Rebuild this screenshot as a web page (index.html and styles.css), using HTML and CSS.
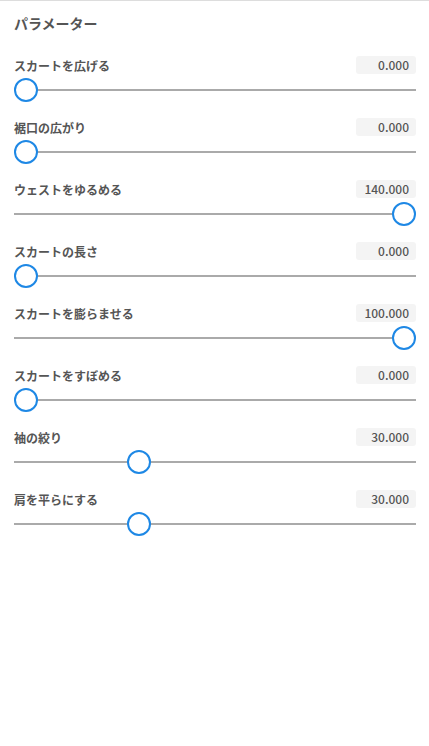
FILE: index.html
```html
<!DOCTYPE html>
<html>

<head>
    <title>パラメーター</title>
    <meta charset="UTF-8">
    <meta name="viewport" content="width=device-width, initial-scale=1.0">
    <link rel="stylesheet" href="styles.css">
</head>

<body>
    <div class="panel">
        <h2 class="title">パラメーター</h2>

        <div class="param">
            <div class="param-head">
                <span class="param-label">スカートを広げる</span>
                <span class="param-value">0.000</span>
            </div>
            <div class="slider">
                <div class="track"></div>
                <div class="thumb" style="left: calc((100% - 24px) * 0)"></div>
            </div>
        </div>

        <div class="param">
            <div class="param-head">
                <span class="param-label">裾口の広がり</span>
                <span class="param-value">0.000</span>
            </div>
            <div class="slider">
                <div class="track"></div>
                <div class="thumb" style="left: calc((100% - 24px) * 0)"></div>
            </div>
        </div>

        <div class="param">
            <div class="param-head">
                <span class="param-label">ウェストをゆるめる</span>
                <span class="param-value">140.000</span>
            </div>
            <div class="slider">
                <div class="track"></div>
                <div class="thumb" style="left: calc((100% - 24px) * 1)"></div>
            </div>
        </div>

        <div class="param">
            <div class="param-head">
                <span class="param-label">スカートの長さ</span>
                <span class="param-value">0.000</span>
            </div>
            <div class="slider">
                <div class="track"></div>
                <div class="thumb" style="left: calc((100% - 24px) * 0)"></div>
            </div>
        </div>

        <div class="param">
            <div class="param-head">
                <span class="param-label">スカートを膨らませる</span>
                <span class="param-value">100.000</span>
            </div>
            <div class="slider">
                <div class="track"></div>
                <div class="thumb" style="left: calc((100% - 24px) * 1)"></div>
            </div>
        </div>

        <div class="param">
            <div class="param-head">
                <span class="param-label">スカートをすぼめる</span>
                <span class="param-value">0.000</span>
            </div>
            <div class="slider">
                <div class="track"></div>
                <div class="thumb" style="left: calc((100% - 24px) * 0)"></div>
            </div>
        </div>

        <div class="param">
            <div class="param-head">
                <span class="param-label">袖の絞り</span>
                <span class="param-value">30.000</span>
            </div>
            <div class="slider">
                <div class="track"></div>
                <div class="thumb" style="left: calc((100% - 24px) * 0.3)"></div>
            </div>
        </div>

        <div class="param">
            <div class="param-head">
                <span class="param-label">肩を平らにする</span>
                <span class="param-value">30.000</span>
            </div>
            <div class="slider">
                <div class="track"></div>
                <div class="thumb" style="left: calc((100% - 24px) * 0.3)"></div>
            </div>
        </div>
    </div>
</body>

</html>
```

FILE: styles.css
```css
body {
    margin: 0;
    border-top: 1px solid #dddddd;
    background-color: #ffffff;
    font-family: "Noto Sans CJK JP", "Noto Sans", sans-serif;
    color: #555555;
}

.panel {
    padding: 12px 13px 0 14px;
}

.title {
    margin: 0 0 23px 0;
    font-size: 14px;
    line-height: 20px;
    font-weight: bold;
}

.param {
    margin-bottom: 16px;
}

.param-head {
    display: flex;
    justify-content: space-between;
    align-items: center;
    height: 18px;
}

.param-label {
    font-size: 12px;
    font-weight: bold;
}

.param-value {
    min-width: 48px;
    height: 18px;
    line-height: 18px;
    padding: 0 7px 0 5px;
    border-radius: 3px;
    background-color: #f4f4f4;
    font-size: 12px;
    font-weight: 500;
    text-align: right;
}

.slider {
    position: relative;
    height: 24px;
    margin-top: 4px;
}

.track {
    position: absolute;
    left: 0;
    right: 0;
    top: 11px;
    height: 2px;
    background-color: #aaaaaa;
}

.thumb {
    position: absolute;
    top: 0;
    width: 20px;
    height: 20px;
    border: 2px solid #1e88e5;
    border-radius: 50%;
    background-color: #ffffff;
}
```
